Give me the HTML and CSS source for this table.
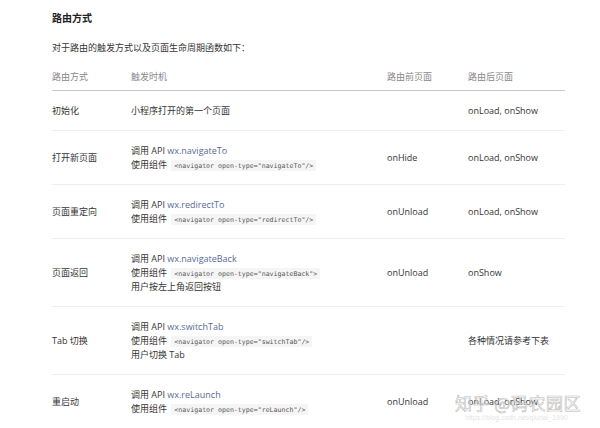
FILE: index.html
```html
<!DOCTYPE html>
<html lang="zh-CN">
<head>
<meta charset="utf-8">
<link rel="stylesheet" href="styles.css">
</head>
<body>
<div class="page">
  <h3 class="title">路由方式</h3>
  <p class="intro">对于路由的触发方式以及页面生命周期函数如下：</p>
  <table class="routes">
    <thead>
      <tr>
        <th class="c1"><span class="ln">路由方式</span></th>
        <th class="c2"><span class="ln">触发时机</span></th>
        <th class="c3"><span class="ln">路由前页面</span></th>
        <th class="c4"><span class="ln">路由后页面</span></th>
      </tr>
    </thead>
    <tbody>
      <tr>
        <td><span class="ln">初始化</span></td>
        <td><span class="ln">小程序打开的第一个页面</span></td>
        <td></td>
        <td><span class="ln">onLoad, onShow</span></td>
      </tr>
      <tr>
        <td><span class="ln">打开新页面</span></td>
        <td><span class="ln">调用 API <span class="link">wx.navigateTo</span></span><span class="ln">使用组件 <code>&lt;navigator open-type="navigateTo"/&gt;</code></span></td>
        <td><span class="ln">onHide</span></td>
        <td><span class="ln">onLoad, onShow</span></td>
      </tr>
      <tr>
        <td><span class="ln">页面重定向</span></td>
        <td><span class="ln">调用 API <span class="link">wx.redirectTo</span></span><span class="ln">使用组件 <code>&lt;navigator open-type="redirectTo"/&gt;</code></span></td>
        <td><span class="ln">onUnload</span></td>
        <td><span class="ln">onLoad, onShow</span></td>
      </tr>
      <tr>
        <td><span class="ln">页面返回</span></td>
        <td><span class="ln">调用 API <span class="link">wx.navigateBack</span></span><span class="ln">使用组件 <code>&lt;navigator open-type="navigateBack"&gt;</code></span><span class="ln">用户按左上角返回按钮</span></td>
        <td><span class="ln">onUnload</span></td>
        <td><span class="ln">onShow</span></td>
      </tr>
      <tr>
        <td><span class="ln">Tab 切换</span></td>
        <td><span class="ln">调用 API <span class="link">wx.switchTab</span></span><span class="ln">使用组件 <code>&lt;navigator open-type="switchTab"/&gt;</code></span><span class="ln">用户切换 Tab</span></td>
        <td></td>
        <td><span class="ln">各种情况请参考下表</span></td>
      </tr>
      <tr>
        <td><span class="ln">重启动</span></td>
        <td><span class="ln">调用 API <span class="link">wx.reLaunch</span></span><span class="ln">使用组件 <code>&lt;navigator open-type="reLaunch"/&gt;</code></span></td>
        <td><span class="ln">onUnload</span></td>
        <td><span class="ln">onLoad, onShow</span></td>
      </tr>
    </tbody>
  </table>
  <div class="watermark">
    <div class="wm-main">知乎 @码农园区</div>
    <div class="wm-url">https://blog.csdn.net/qiuhai_1990</div>
  </div>
</div>
</body>
</html>
```
FILE: styles.css
```css
html, body {
  margin: 0;
  padding: 0;
  background: #fff;
}
body {
  font-family: "Open Sans", "Noto Sans CJK SC", sans-serif;
  font-size: 9px;
  color: #353535;
}
.page {
  position: relative;
  width: 600px;
  height: 428px;
  overflow: hidden;
  padding: 0 35px 0 52px;
  box-sizing: border-box;
}
.title {
  margin: 0;
  padding-top: 10px;
  font-size: 10px;
  line-height: 16px;
  font-weight: bold;
  color: #222;
}
.intro {
  margin: 14px 0 0;
  line-height: 16px;
  height: 16px;
}
.routes {
  margin-top: 7px;
  width: 513px;
  border-collapse: collapse;
  table-layout: fixed;
}
.routes th, .routes td {
  text-align: left;
  vertical-align: middle;
  padding: 12.5px 0;
  font-weight: normal;
  border-bottom: 1px solid #eeeeee;
}
.routes th {
  padding: 6px 0;
  color: #888;
  border-bottom: 1px solid #c8c8c8;
}
.ln {
  display: block;
  height: 14px;
  line-height: 14px;
  white-space: nowrap;
}
.routes th .ln {
  height: 15px;
  line-height: 15px;
}
.c1 { width: 79px; }
.c2 { width: 256px; }
.c3 { width: 81px; }
.c4 { width: 97px; }
.link {
  color: #576b95;
}
code {
  font-family: "DejaVu Sans Mono", "Liberation Mono", monospace;
  font-size: 6.6px;
  line-height: 10px;
  background: #f5f5f5;
  padding: 1.5px 3px;
  margin-left: 2px;
  color: #555;
}
.watermark {
  position: absolute;
  left: 455px;
  top: 393px;
}
.wm-main {
  font-family: "Noto Sans CJK SC", sans-serif;
  font-size: 17px;
  line-height: 20px;
  color: rgba(255,255,255,0.6);
  -webkit-text-stroke: 0.6px rgba(170,170,170,0.8);
  letter-spacing: 0.5px;
}
.wm-url {
  font-family: "Liberation Sans", sans-serif;
  font-size: 7px;
  line-height: 9px;
  margin-left: 10px;
  color: rgba(200,200,200,0.5);
}
```
